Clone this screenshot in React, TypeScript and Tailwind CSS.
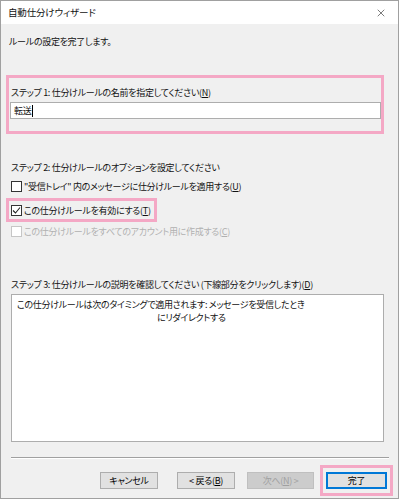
import { X } from "lucide-react";

const font = "[font-family:'Noto_Sans_CJK_JP',sans-serif] [font-feature-settings:'palt']";

function Key({ k }: { k: string }) {
  return (
    <>
      (<span className="underline underline-offset-1">{k}</span>)
    </>
  );
}

function Check({ checked, disabled }: { checked?: boolean; disabled?: boolean }) {
  return (
    <span
      className={`w-[11px] h-[11px] border flex items-center justify-center shrink-0 bg-white ${
        disabled ? "border-[#c6c6c6]" : "border-[#333]"
      }`}
    >
      {checked && (
        <svg width="9" height="9" viewBox="0 0 9 9">
          <path d="M1 4.5 L3.5 7 L8 1.5" fill="none" stroke="#222" strokeWidth="1.1" />
        </svg>
      )}
    </span>
  );
}

function Btn({
  children,
  disabled,
  primary,
  w,
}: {
  children: React.ReactNode;
  disabled?: boolean;
  primary?: boolean;
  w: string;
}) {
  return (
    <div
      className={`${w} h-[17px] flex items-center justify-center whitespace-nowrap ${
        disabled
          ? "bg-[#cccccc] border border-[#bfbfbf] text-[#a0a0a0]"
          : primary
            ? "bg-[#e1e1e1] border-2 border-[#0078d7] text-black"
            : "bg-[#e1e1e1] border border-[#adadad] text-black"
      }`}
    >
      {children}
    </div>
  );
}

export default function App() {
  return (
    <div
      className={`w-[400px] h-[499px] bg-white ${font} text-[9px] tracking-[-0.3px] leading-none text-[#111] whitespace-nowrap`}
    >
      <div className="w-[399px] h-[499px] border border-[#a0a0a0] flex flex-col">
        {/* title bar */}
        <div className="h-[23px] bg-white flex items-center justify-between pl-[7px] pr-[11px] shrink-0">
          <span className="text-[9.5px] tracking-[-0.15px]">自動仕分けウィザード</span>
          <X className="w-[12px] h-[12px] text-[#222]" strokeWidth={1.2} />
        </div>

        <div className="flex-1 bg-[#f0f0f0] flex flex-col pl-[5px]">
          <div className="h-[14px] mt-[10px] flex items-center pl-[3px]">ルールの設定を完了します。</div>

          {/* step 1 */}
          <div className="mt-[27px] w-[378px] border-[3px] border-[#f4a8c5] pt-[7px] pb-[12px] pl-[1px]">
            <div className="h-[14px] flex items-center pl-[1px]">
              ステップ 1: 仕分けルールの名前を指定してください<Key k="N" />
            </div>
            <div className="mt-[3px] h-[17px] bg-white border border-[#adadad] flex items-center pl-[3px]">
              転送<span className="w-px h-[12px] bg-black ml-px" />
            </div>
          </div>

          {/* step 2 */}
          <div className="mt-[26px] h-[14px] flex items-center pl-[5px]">
            ステップ 2: 仕分けルールのオプションを設定してください
          </div>
          <div className="mt-[5px] h-[14px] flex items-center gap-[1px] pl-[5px]">
            <Check />
            <span className="ml-[1px]">"受信トレイ" 内のメッセージに仕分けルールを適用する<Key k="U" /></span>
          </div>
          <div className="mt-[5px] w-[151px] h-[24px] border-[3px] border-[#f4a8c5] flex items-center gap-[1px] pl-[2px]">
            <Check checked />
            <span className="ml-[1px]">この仕分けルールを有効にする<Key k="T" /></span>
          </div>
          <div className="mt-[2px] h-[14px] flex items-center gap-[1px] pl-[5px] text-[#b0b0b0]">
            <Check disabled />
            <span className="ml-[1px]">この仕分けルールをすべてのアカウント用に作成する<Key k="C" /></span>
          </div>

          {/* step 3 */}
          <div className="mt-[39px] h-[14px] flex items-center pl-[5px]">
            ステップ 3: 仕分けルールの説明を確認してください (下線部分をクリックします)<Key k="D" />
          </div>
          <div className="mt-[3px] ml-[5px] w-[373px] h-[148px] bg-white border border-[#adadad] pt-[3px] pl-[5px]">
            <div className="h-[13px] flex items-center">
              この仕分けルールは次のタイミングで適用されます: メッセージを受信したとき
            </div>
            <div className="h-[13px] flex items-center pl-[140px]">にリダイレクトする</div>
          </div>

          {/* footer */}
          <div className="mt-[15px] ml-[5px] w-[378px] border-t border-[#a0a0a0] border-b border-b-white" />
          <div className="mt-[6px] flex items-start">
            <div className="ml-[94px] mt-[7px]">
              <Btn w="w-[58px]">キャンセル</Btn>
            </div>
            <div className="ml-[19px] mt-[7px]">
              <Btn w="w-[58px]">
                &lt; 戻る<Key k="B" />
              </Btn>
            </div>
            <div className="ml-[12px] mt-[7px]">
              <Btn w="w-[67px]" disabled>
                次へ<Key k="N" /> &gt;
              </Btn>
            </div>
            <div className="ml-[6px] border-[3px] border-[#f4a8c5] px-[3px] py-[4px]">
              <Btn w="w-[61px]" primary>
                完了
              </Btn>
            </div>
          </div>
        </div>
      </div>
    </div>
  );
}
